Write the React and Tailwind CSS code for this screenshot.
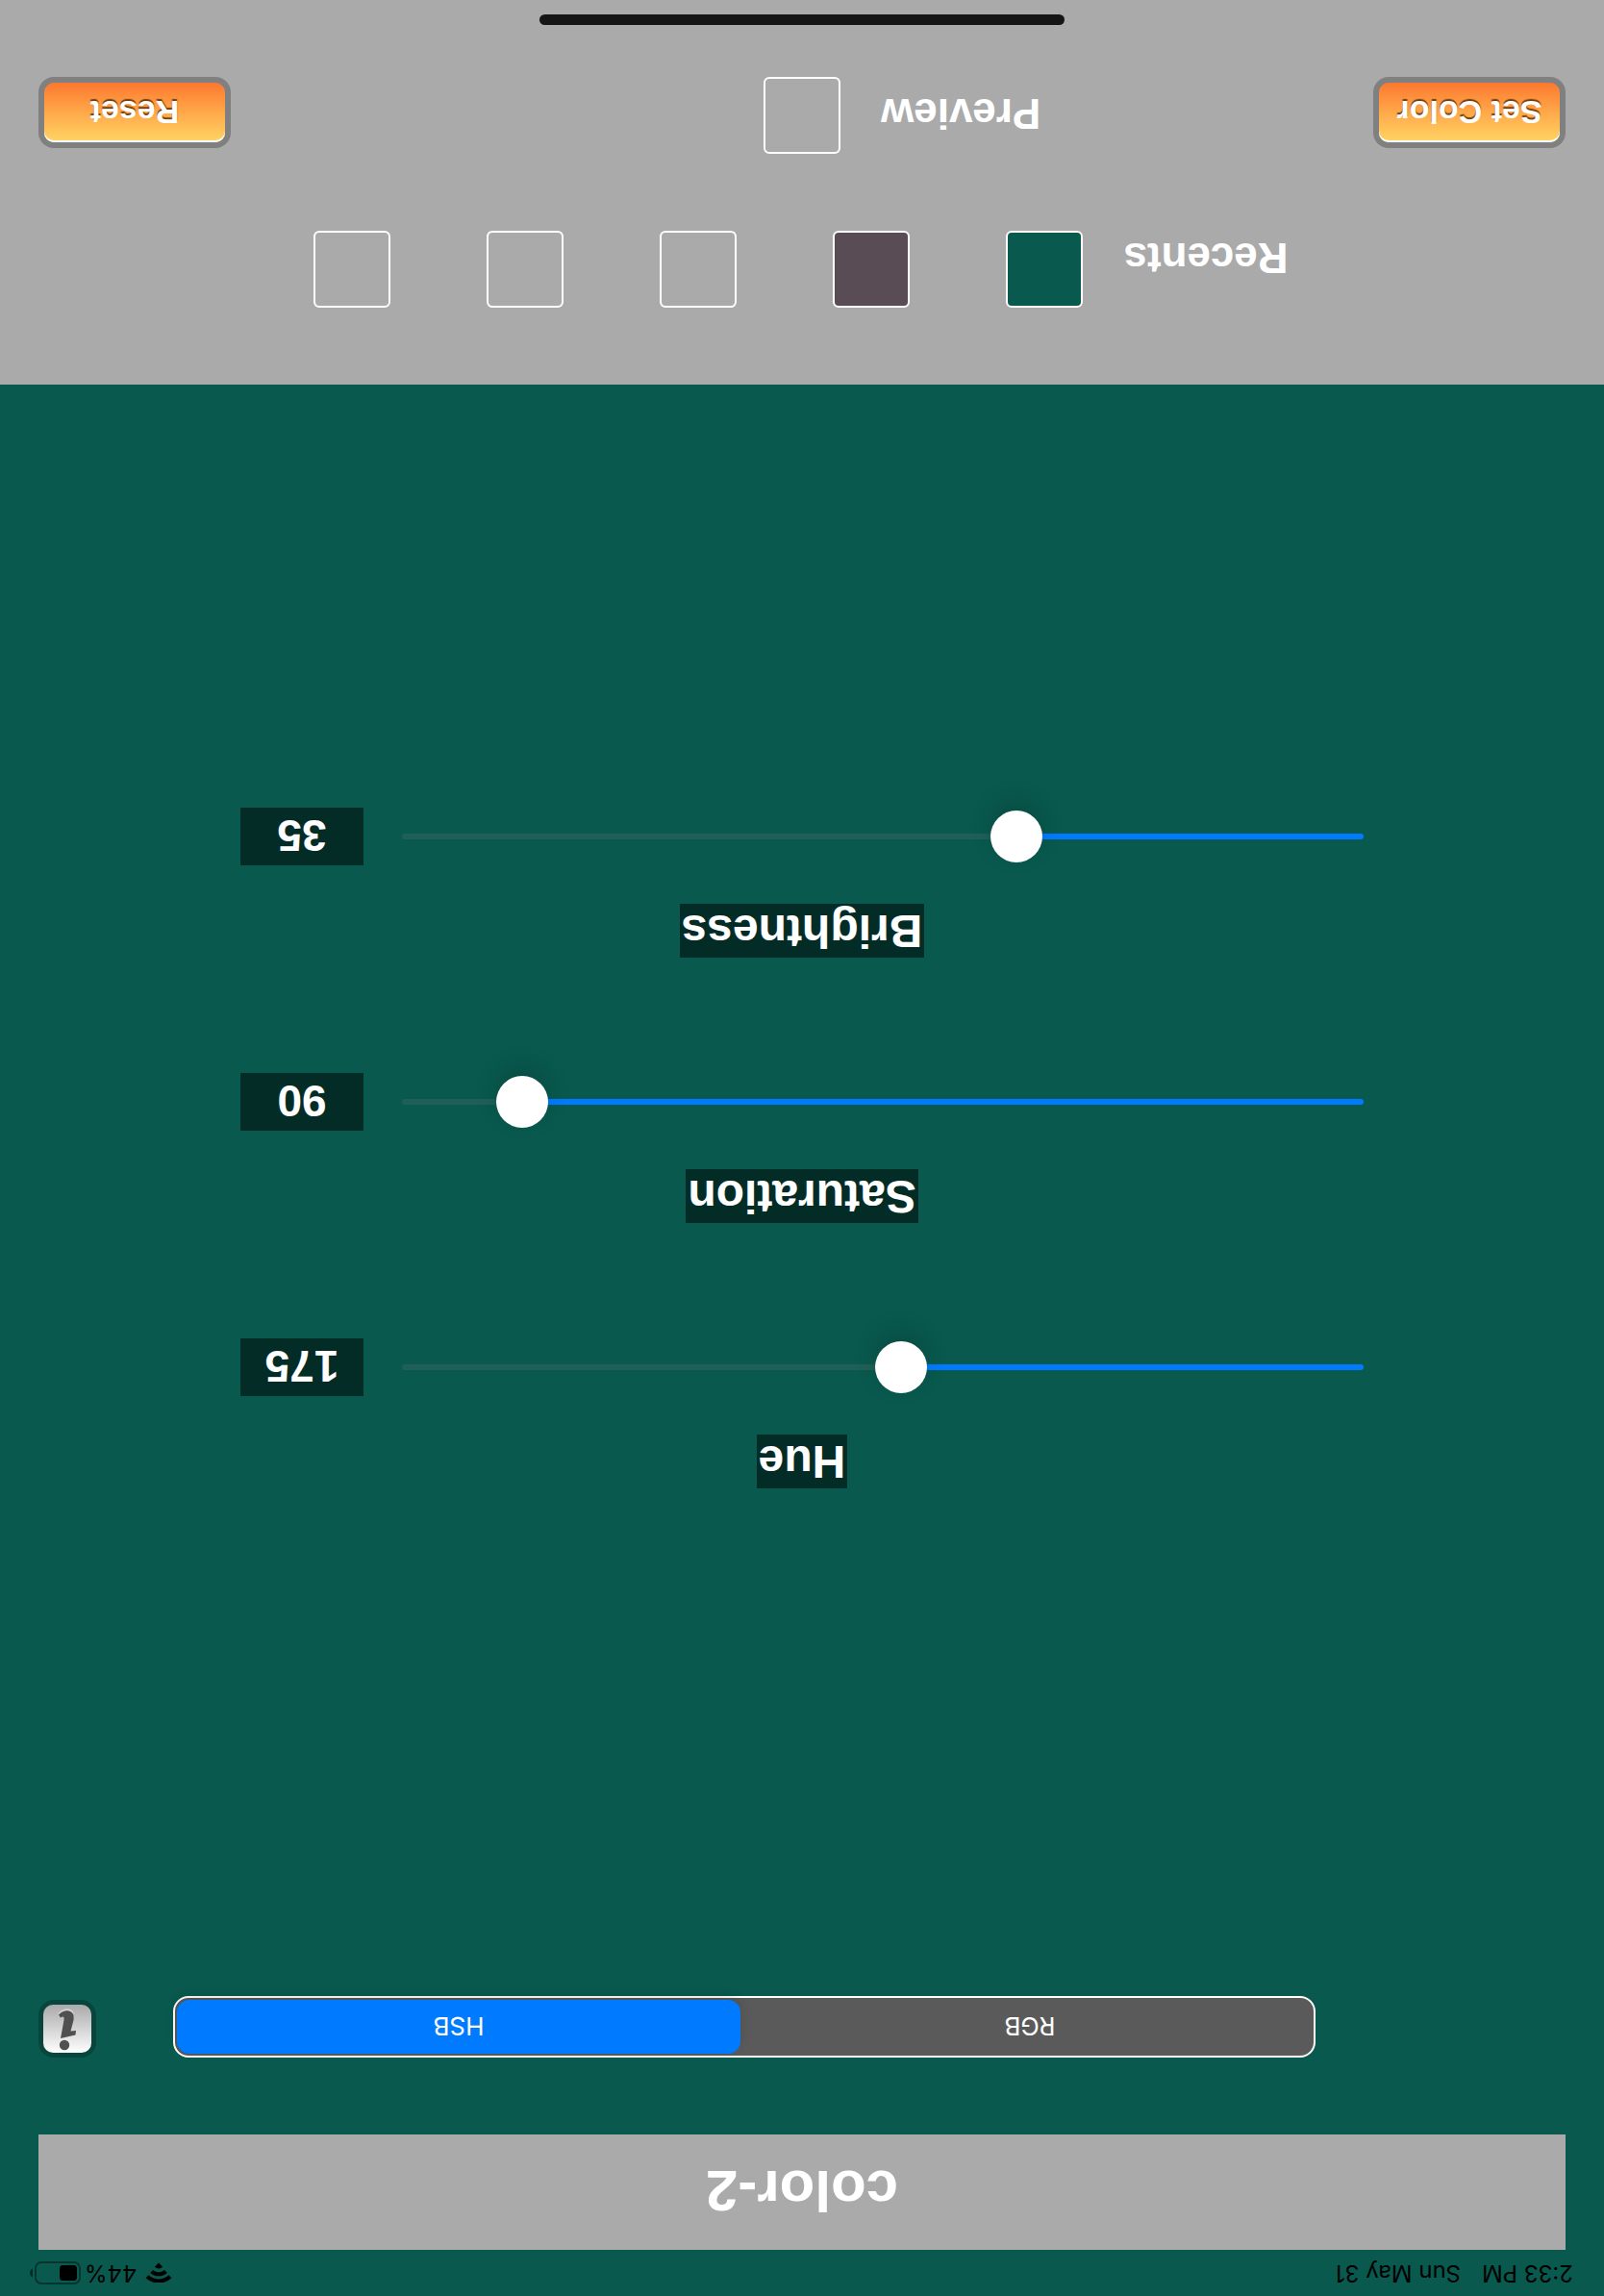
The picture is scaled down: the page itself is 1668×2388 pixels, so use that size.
import { useState } from 'react';

const CHANNELS = [
  { name: 'Hue', position: 480, reading: '175' },
  { name: 'Saturation', position: 896, reading: '90' },
  { name: 'Brightness', position: 353, reading: '35' },
];

function StatusBar() {
  return (
    <div className="flex h-12 items-center justify-between pr-[30px] pl-8 font-['Inter',sans-serif] text-2xl leading-7 text-black">
      <div className="flex gap-[22px]">
        <span>2:33 PM</span>
        <span>Sun May 31</span>
      </div>
      <div className="flex items-center">
        <svg className="mr-2 h-[21px] w-7" viewBox="0 0 28 21" fill="none" stroke="currentColor" aria-hidden="true">
          <path d="M2 6.2A17.6 17.6 0 0 1 26 6.2" strokeWidth="4.2" />
          <path d="M6.6 11.6A11 11 0 0 1 21.4 11.6" strokeWidth="4" />
          <path d="M14 20.4 9.9 16.2A5.8 5.8 0 0 1 18.1 16.2Z" fill="currentColor" stroke="none" />
        </svg>
        <span className="mr-1">44%</span>
        <svg className="h-6 w-[54px]" viewBox="0 0 54 24" aria-hidden="true">
          <rect x="1" y="1" width="46" height="22" rx="6" fill="none" stroke="#000" strokeOpacity=".4" strokeWidth="2" />
          <rect x="4" y="4" width="18" height="16" rx="3.5" fill="#000" />
          <path d="M50 7.5Q53 9 53 12T50 16.500Z" fill="#000" fillOpacity=".5" />
        </svg>
      </div>
    </div>
  );
}

function ModeSwitch() {
  const [mode, setMode] = useState('HSB');
  return (
    <div className="ml-[260px] grid h-16 flex-1 grid-cols-2 gap-2 rounded-2xl border-2 border-white bg-[#5a5a5a] p-0.5">
      {['RGB', 'HSB'].map((m) => (
        <button
          key={m}
          type="button"
          aria-pressed={mode === m}
          onClick={() => setMode(m)}
          className={
            mode === m
              ? "rounded-[13px] bg-[#007aff] font-['Inter',sans-serif] text-[26px] text-white shadow-[0_4px_12px_rgba(0,0,0,0.12)]"
              : "rounded-[13px] font-['Inter',sans-serif] text-[26px] text-white"
          }
        >
          {m}
        </button>
      ))}
    </div>
  );
}

function InfoButton() {
  return (
    <button
      type="button"
      aria-label="Info"
      className="size-[60px] rounded-2xl bg-[#07463d] p-[5px]"
    >
      <span className="flex size-full items-center justify-center rounded-[10px] bg-linear-to-b from-white to-[#aaaaaa]">
        <svg className="size-[50px]" viewBox="0 0 50 50" aria-hidden="true">
          <g fill="none" stroke="#d6d6d6" strokeWidth="2">
            <path d="M19 41Q22 45.500 27 44.500 31 43.500 34 40" />
          </g>
          <circle cx="28" cy="8" r="5.200" fill="#505050" />
          <path d="M16.500 18.500 32 15 28.500 34C28 37 29 38.500 32 36.500L34 39.500C30 43.500 25.500 44.500 22 43 18.500 41.500 18 38 18.500 34L21.500 22.500 16 23Z" fill="#505050" />
        </svg>
      </span>
    </button>
  );
}

function ChannelSlider({ name, position, reading }) {
  const [value, setValue] = useState(position);
  const id = name.toLowerCase();
  const fraction = value / 1000;
  return (
    <div className="flex flex-col items-center gap-10">
      <label htmlFor={id} className="bg-[#042c27] px-0.5 text-5xl leading-[56px] font-bold">
        {name}
      </label>
      <div className="flex w-full items-center gap-10">
        <input
          id={id}
          type="range"
          min="0"
          max="1000"
          value={value}
          onChange={(e) => setValue(Number(e.target.value))}
          style={{ '--fill': `calc(27px + ${fraction} * (100% - 54px))` }}
          className="h-[54px] min-w-0 flex-1 appearance-none bg-transparent [&::-webkit-slider-runnable-track]:h-1.5 [&::-webkit-slider-runnable-track]:rounded-full [&::-webkit-slider-runnable-track]:bg-[linear-gradient(to_right,#007aff_var(--fill),#205f57_var(--fill))] [&::-webkit-slider-thumb]:-mt-6 [&::-webkit-slider-thumb]:size-[54px] [&::-webkit-slider-thumb]:appearance-none [&::-webkit-slider-thumb]:rounded-full [&::-webkit-slider-thumb]:bg-white [&::-webkit-slider-thumb]:shadow-[0_10px_24px_rgba(0,0,0,0.15)]"
        />
        <output htmlFor={id} className="h-[60px] w-32 bg-[#042c27] text-center text-[46px] leading-[62px] font-bold">
          {reading}
        </output>
      </div>
    </div>
  );
}

function GlossyButton({ children }) {
  return (
    <button
      type="button"
      className="h-[74px] w-[200px] rounded-2xl bg-[#808080] p-1.5 text-[34px] font-bold text-white"
    >
      <span className="flex size-full items-center justify-center rounded-[10px] bg-linear-to-b from-[#fed564] to-[#fb782f] shadow-[inset_0_2px_0_#fff] [text-shadow:0_2px_1px_rgba(90,45,0,0.85)]">
        {children}
      </span>
    </button>
  );
}

const SWATCH = 'size-20 rounded-md border-2 border-white';

function Footer() {
  return (
    <footer className="bg-[#aaaaaa] pt-20 text-[44px] font-bold">
      <div className="flex items-end justify-center">
        <span className="mr-10 w-44 text-center leading-[56px]">Recents</span>
        <div className="flex gap-[100px]">
          <button type="button" aria-label="Recent color 1" className={`${SWATCH} bg-[#09594e]`} />
          <button type="button" aria-label="Recent color 2" className={`${SWATCH} bg-[#594c55]`} />
          <button type="button" aria-label="Recent color 3" className={SWATCH} />
          <button type="button" aria-label="Recent color 4" className={SWATCH} />
          <button type="button" aria-label="Recent color 5" className={SWATCH} />
        </div>
      </div>
      <div className="mt-20 grid grid-cols-[1fr_auto_1fr] items-end px-10">
        <div className="flex items-end justify-between">
          <GlossyButton>Set Color</GlossyButton>
          <span className="mr-[42px] leading-[76px]">Preview</span>
        </div>
        <div className={SWATCH} />
        <div className="flex justify-end">
          <GlossyButton>Reset</GlossyButton>
        </div>
      </div>
      <div className="flex h-20 items-end justify-center pb-[15px]">
        <div className="h-[11px] w-[546px] rounded-full bg-[#151515]" />
      </div>
    </footer>
  );
}

export default function App() {
  return (
    <div className="flex min-h-screen rotate-180 flex-col bg-[#09594e] font-['Liberation_Sans',Arial,sans-serif] text-white">
      <StatusBar />
      <h1 className="mx-10 h-[120px] bg-[#aaaaaa] text-center text-[60px] leading-[124px] font-bold">color-2</h1>
      <div className="mx-10 mt-20 flex gap-20">
        <ModeSwitch />
        <InfoButton />
      </div>
      <main className="mx-auto flex w-full max-w-[1168px] flex-1 flex-col justify-center gap-[120px] pt-[88px]">
        {CHANNELS.map((c) => (
          <ChannelSlider key={c.name} {...c} />
        ))}
      </main>
      <Footer />
    </div>
  );
}
